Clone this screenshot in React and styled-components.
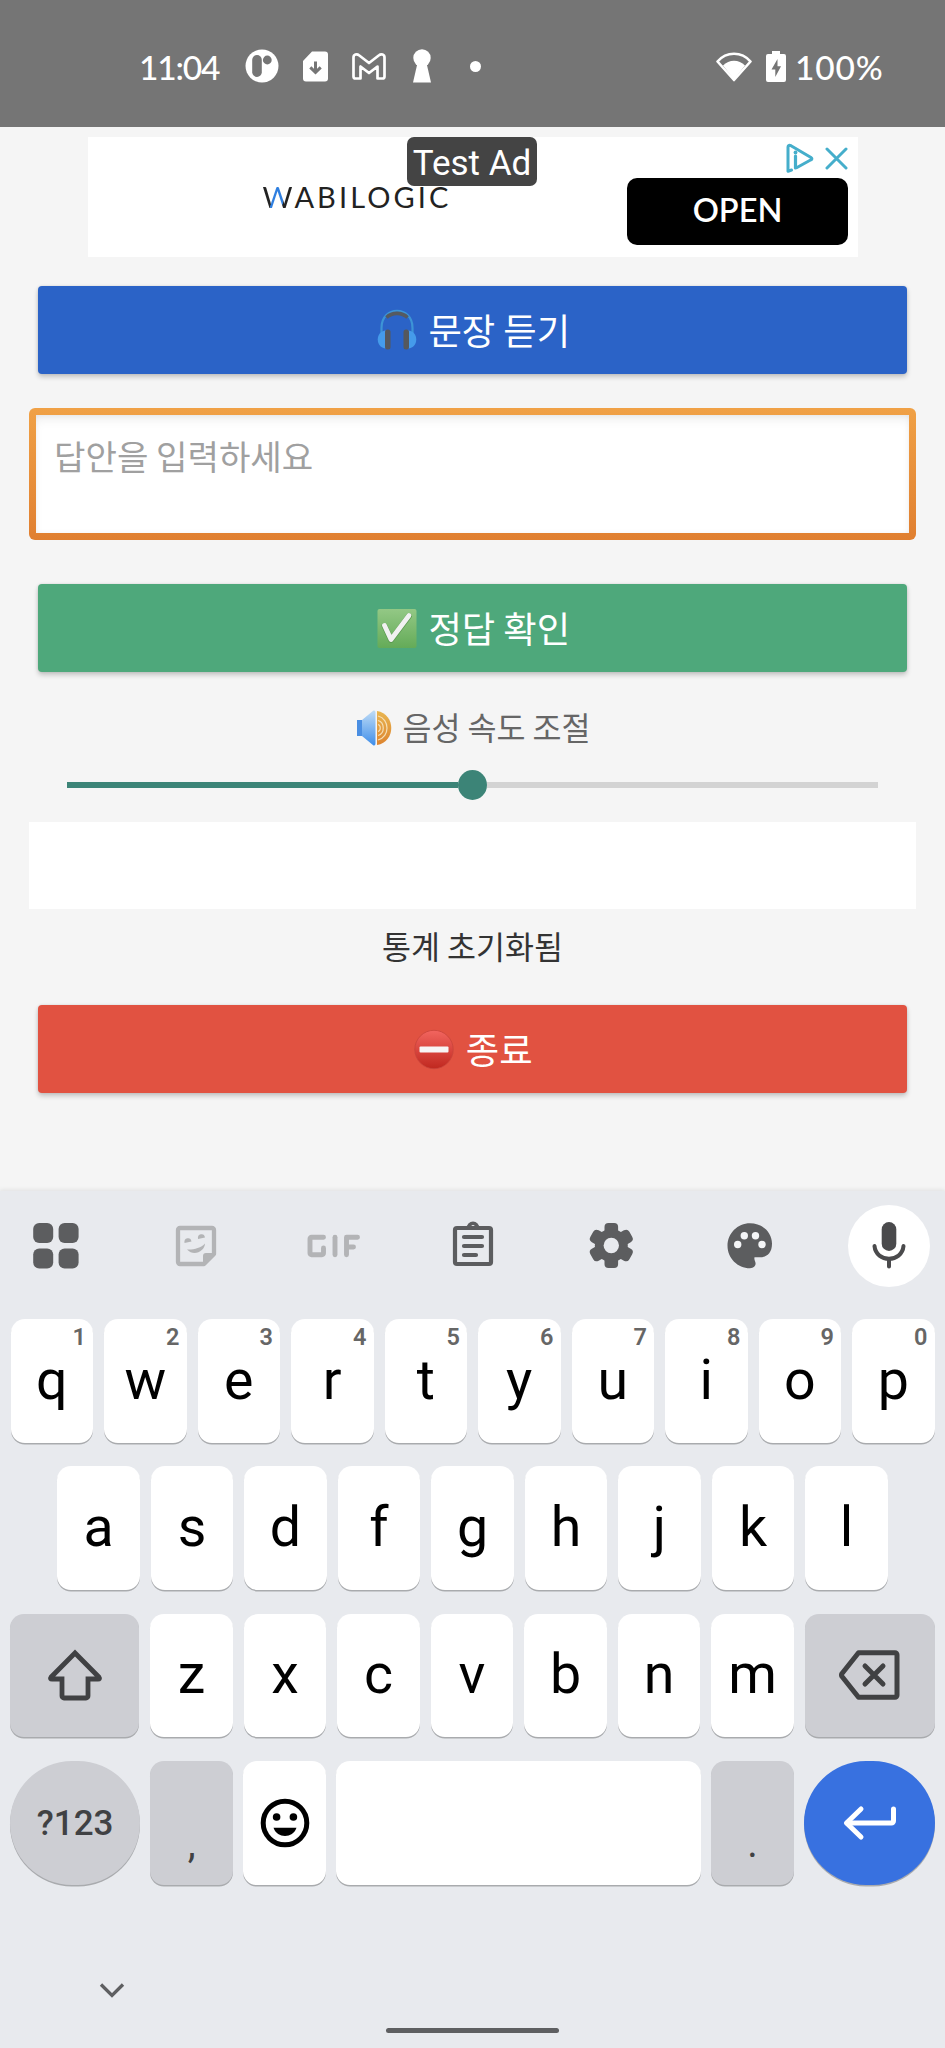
import React from "react";
import styled, { createGlobalStyle } from "styled-components";

const Global = createGlobalStyle`
  * { box-sizing: border-box; }
  body { margin: 0; background: #f5f5f5; }
  svg { display: block; flex: none; }
  button { border: 0; margin: 0; padding: 0; font: inherit; color: inherit; }
`;

const Screen = styled.div`
  width: 945px;
  height: 2048px;
  display: flex;
  flex-direction: column;
  background: #f5f5f5;
  overflow: hidden;
  font-family: Roboto, "Noto Sans CJK KR", sans-serif;
`;

/* ---------- status bar ---------- */
const StatusBar = styled.header`
  height: 127px;
  flex: none;
  padding: 5px 64px 0 139px;
  display: flex;
  align-items: center;
  justify-content: space-between;
  background: #757575;
  color: #fff;
`;
const StatusGroup = styled.div`
  display: flex;
  align-items: center;
`;
const StatusText = styled.span`
  font: 500 33.5px/40px Lato, sans-serif;
  letter-spacing: ${(p) => p.$spacing || "0"};
  width: ${(p) => p.$width}px;
  white-space: nowrap;
  padding-top: 2px;
`;

/* ---------- content ---------- */
const Content = styled.main`
  height: 1064px;
  flex: none;
  padding: 10px 29px 0;
  display: flex;
  flex-direction: column;
`;
const AdBanner = styled.section`
  position: relative;
  width: 770px;
  height: 120px;
  margin: 0 auto;
  background: #fff;
  display: flex;
  justify-content: space-between;
  padding-left: 175px;
  padding-right: 9.5px;
`;
const AdBadge = styled.span`
  position: absolute;
  top: 0;
  left: 319.5px;
  width: 130px;
  height: 49px;
  border-radius: 7px;
  background: #444;
  color: #fff;
  text-align: center;
  font: 400 35px/53px Roboto, sans-serif;
`;
const Brand = styled.span`
  align-self: flex-start;
  margin-top: 42px;
  font: 400 29px/36px Lato, sans-serif;
  letter-spacing: 3.1px;
  color: #222;
`;
const BrandInitial = styled.span`
  background: linear-gradient(100deg, #222 32%, #2f7fe0 33%, #2f7fe0 64%, #222 65%);
  background-clip: text;
  -webkit-background-clip: text;
  color: transparent;
`;
const AdSide = styled.div`
  display: flex;
  flex-direction: column;
  align-items: flex-end;
  padding-top: 6px;
`;
const AdOpen = styled.button`
  width: 221px;
  height: 67px;
  margin-top: 5px;
  border-radius: 10px;
  background: #000;
  color: #fff;
  font: 600 32.5px/62px Lato, sans-serif;
  padding-bottom: 3px;
`;
const ActionButton = styled.button`
  height: 88px;
  margin: ${(p) => p.$top}px 9px 0;
  padding-left: 2px;
  border-radius: 4px;
  background: ${(p) => p.$color};
  color: #fff;
  display: flex;
  align-items: center;
  justify-content: center;
  gap: 11.5px;
  font: 400 36.3px/52px "Noto Sans CJK KR", sans-serif;
  box-shadow: 0 3px 5px rgba(0, 0, 0, 0.2), 0 0 3px rgba(0, 0, 0, 0.1);
`;
const ActionLabel = styled.span`
  position: relative;
  top: -1px;
`;
const AnswerFrame = styled.div`
  height: 132px;
  margin-top: 34px;
  padding: 7px;
  border-radius: 6px;
  background: linear-gradient(#f0a146, #e07f30);
`;
const AnswerInput = styled.textarea`
  display: block;
  width: 100%;
  height: 100%;
  border: 0;
  outline: 0;
  resize: none;
  overflow: hidden;
  padding: 16px 18px;
  background: #fff;
  box-shadow: inset 0 7px 12px -4px rgba(0, 0, 0, 0.09), inset 0 0 5px rgba(0, 0, 0, 0.05);
  font: 400 34.2px/48px "Noto Sans CJK KR", sans-serif;
  &::placeholder { color: #a0a0a0; opacity: 1; }
`;
const SpeedLabel = styled.div`
  height: 44px;
  margin-top: 34px;
  padding-left: 1px;
  display: flex;
  align-items: center;
  justify-content: center;
  gap: 11px;
  color: #666;
  font: 400 31.5px/44px "Noto Sans CJK KR", sans-serif;
`;
const SpeedText = styled.span`
  padding-bottom: 5px;
`;
const Slider = styled.div`
  height: 30px;
  margin: 20px 38px 0;
  display: flex;
  align-items: center;
`;
const SliderTrack = styled.div`
  flex: 1;
  height: 6px;
  background: ${(p) => (p.$on ? "#3c8477" : "#d3d3d3")};
`;
const SliderThumb = styled.div`
  width: 29px;
  height: 30px;
  border-radius: 50%;
  background: #3c8477;
`;
const ResultBox = styled.div`
  height: 87px;
  margin-top: 22px;
  background: #fff;
`;
const StatsText = styled.p`
  margin: 14px 0 0;
  text-align: center;
  color: #333;
  font: 400 31.5px/45px "Noto Sans CJK KR", sans-serif;
`;

/* ---------- keyboard ---------- */
const Keyboard = styled.section`
  flex: 1;
  background: #e8eaee;
  box-shadow: 0 -1px 4px rgba(120, 125, 135, 0.18);
  display: flex;
  flex-direction: column;
`;
const Toolbar = styled.div`
  height: 110px;
  padding: 0 14px;
  display: flex;
  align-items: center;
  justify-content: space-between;
`;
const MicButton = styled.div`
  width: 82px;
  height: 82px;
  margin-right: 1px;
  border-radius: 50%;
  background: #fff;
  display: flex;
  align-items: center;
  justify-content: center;
`;
const Keys = styled.div`
  margin-top: 18px;
  padding: 0 10.4px;
  display: flex;
  flex-direction: column;
  gap: 23.6px;
`;
const KeyRow = styled.div`
  display: flex;
  justify-content: center;
  gap: ${(p) => p.$gap || 11}px;
`;
const tones = {
  light: ["#fff", "#000"],
  gray: ["#cdced3", "#404143"],
  blue: ["#3871e0", "#fff"],
};
const Key = styled.button`
  position: relative;
  width: ${(p) => p.$width || 82.5}px;
  flex: ${(p) => (p.$grow ? "1" : "none")};
  height: 123.7px;
  display: flex;
  align-items: center;
  justify-content: center;
  border-radius: ${(p) => (p.$round ? "65px" : "14px")};
  background: ${(p) => tones[p.$tone || "light"][0]};
  color: ${(p) => tones[p.$tone || "light"][1]};
  box-shadow: 0 1.5px 0.5px #a9abae;
  font: 400 55.5px/66px Roboto, sans-serif;
`;
const KeyHint = styled.span`
  position: absolute;
  top: 4px;
  right: 7px;
  color: #666;
  font: 600 23.5px/28px Roboto, sans-serif;
`;
const SymbolsLabel = styled.span`
  padding-top: 2px;
  font: 500 35px/42px Roboto, sans-serif;
`;
const Punctuation = styled.span`
  align-self: flex-end;
  margin-bottom: 18px;
  font: 400 40px/46px Roboto, sans-serif;
`;
const NavBar = styled.footer`
  flex: 1;
  padding: 97px 0 0 99px;
  display: flex;
  flex-direction: column;
  gap: 29.4px;
`;
const HomeHandle = styled.div`
  width: 173px;
  height: 5px;
  margin-left: 287px;
  border-radius: 3px;
  background: #5e5f61;
`;

/* ---------- drawings ---------- */
const PIcon = () => (
  <svg width="34" height="34" viewBox="-17 -17 34 34">
    <circle r="16.5" fill="#fff" />
    <rect x="-9.8" y="-11" width="9.6" height="22" rx="4.8" fill="#757575" />
    <circle cx="5.3" cy="-6" r="4.4" fill="#757575" />
  </svg>
);
const SdIcon = () => (
  <svg width="25" height="31" viewBox="0 0 25 31">
    <path d="M9 0.5H22a3 3 0 0 1 3 3V27.500a3 3 0 0 1-3 3H3a3 3 0 0 1-3-3V10z" fill="#fff" />
    <path d="M12.500 10.500V21M7.300 16.300l5.200 5 5.200-5" stroke="#757575" strokeWidth="3" fill="none" />
  </svg>
);
const MailIcon = () => (
  <svg width="34" height="27" viewBox="0 0 34 27">
    <path
      d="M1.500 4.500C1.500 1.500 4.800.5 7 2.300L17 10l10-7.700c2.200-1.800 5.500-.8 5.500 2.200V23.500a2 2 0 0 1-2 2H25.500V13.500L17 20 8.500 13.500V25.500H3.500a2 2 0 0 1-2-2z"
      fill="none" stroke="#fff" strokeWidth="2.700" strokeLinejoin="round"
    />
  </svg>
);
const KeyholeIcon = () => (
  <svg width="18" height="34" viewBox="0 0 18 34">
    <circle cx="9" cy="9" r="8.700" fill="#fff" />
    <path d="M4.500 14h9L18 33.500H0z" fill="#fff" />
  </svg>
);
const DotIcon = () => (
  <svg width="11" height="11" viewBox="0 0 11 11"><circle cx="5.500" cy="5.500" r="5.500" fill="#fff" /></svg>
);
const WifiIcon = () => (
  <svg width="36" height="31" viewBox="0 0 36 31">
    <path d="M1.500 10.500C10.500.2 25.500.2 34.500 10.500L18 29z" fill="none" stroke="#fff" strokeWidth="2.600" strokeLinejoin="round" />
    <path d="M7 14.500C13 8 23 8 29 14.500L18 28.500z" fill="#fff" />
  </svg>
);
const BatteryIcon = () => (
  <svg width="20" height="31" viewBox="0 0 20 31">
    <path d="M6 0h8v3h4a2 2 0 0 1 2 2v24a2 2 0 0 1-2 2H2a2 2 0 0 1-2-2V5a2 2 0 0 1 2-2h4z" fill="#fff" />
    <path d="M11.500 8L5.500 18.500H9.300V26L15 15.300H11.500z" fill="#757575" />
  </svg>
);
const AdMarks = () => (
  <svg width="63" height="30" viewBox="0 0 63 30">
    <g fill="none" stroke="#45aecb" strokeWidth="3" strokeLinejoin="round" strokeLinecap="round">
      <path d="M6.500 27L3 28.300V4C3 2 4.500 2 6 2.700L26 14.500c1.200.8 1.200 1.700 0 2.300L12 24.500" />
      <path d="M10.500 13v12" strokeWidth="3.200" />
      <path d="M42 6l19 19M61 6L42 25" />
    </g>
    <circle cx="10.500" cy="9.500" r="1.900" fill="#45aecb" />
  </svg>
);
const Headphones = () => (
  <svg width="40" height="42" viewBox="0 0 40 42">
    <path d="M4.500 26V19C4.500-4 35.500-4 35.500 19v7" fill="none" stroke="#3d94d6" strokeWidth="2.200" />
    <path d="M9.500 8.500C15 3 25 3 30.500 8.500" fill="none" stroke="#555a60" strokeWidth="3.600" />
    <path d="M9 21.500C-2 22-2 39 9 39.500z" fill="#459bea" />
    <path d="M31 21.500C42 22 42 39 31 39.500z" fill="#459bea" />
    <rect x="8" y="20.500" width="5.500" height="20" rx="2.500" fill="#55585d" />
    <rect x="26.500" y="20.500" width="5.500" height="20" rx="2.500" fill="#55585d" />
  </svg>
);
const CheckMark = () => (
  <svg width="40" height="42" viewBox="0.5 -1.500 40 42">
    <defs>
      <linearGradient id="checkFill" x2="0" y2="1"><stop stopColor="#93c885" /><stop offset="1" stopColor="#64ab58" /></linearGradient>
    </defs>
    <rect x="1" y="0.500" width="39" height="39" rx="2" fill="url(#checkFill)" />
    <path d="M8 17.500L14.500 31.500L32.500 7.500" fill="none" stroke="#5b9a50" strokeWidth="5.800" strokeLinecap="round" strokeLinejoin="round" />
    <path d="M8 17L14.500 31L32.500 7" fill="none" stroke="#f1f1f1" strokeWidth="4.800" strokeLinecap="round" strokeLinejoin="round" />
  </svg>
);
const Speaker = () => (
  <svg width="36" height="36" viewBox="0 0 36 36">
    <defs>
      <linearGradient id="coneFill" x2="0" y2="1"><stop stopColor="#bfdcf6" /><stop offset="1" stopColor="#3f8eea" /></linearGradient>
      <linearGradient id="waveFill" x2="0" y2="1"><stop stopColor="#e9b650" /><stop offset="1" stopColor="#dd842f" /></linearGradient>
    </defs>
    <path d="M21 1C40 4 40 32 21 35z" fill="url(#waveFill)" />
    <path d="M22 6c12 3 12 21 0 24M22 10.500c7 2 7 13 0 15M22 14.500c3 1 3 6 0 7" fill="none" stroke="#f5dfb6" strokeWidth="1.200" />
    <path d="M1 10H6L17.500.5q2-.5 2 2V33.500q0 2.500-2 2L6 26H1z" fill="url(#coneFill)" />
    <path d="M1 10H6V26H1z" fill="#4a8ee2" />
  </svg>
);
const NoEntry = () => (
  <svg width="40" height="42" viewBox="0 -1.500 40 42">
    <defs>
      <linearGradient id="stopFill" x2="0" y2="1"><stop stopColor="#f2655f" /><stop offset="1" stopColor="#c0281f" /></linearGradient>
    </defs>
    <circle cx="20" cy="20" r="19.200" fill="url(#stopFill)" stroke="#c8443b" strokeWidth=".8" />
    <rect x="5.500" y="17" width="29" height="6" rx="1" fill="#f7f5f5" />
  </svg>
);

const ToolIcon = ({ children, color = "#5c5d5f" }) => (
  <svg width="84" height="84" viewBox="-42 -42 84 84" fill={color} stroke="none">{children}</svg>
);
const toolStroke = (color, width) => ({
  fill: "none", stroke: color, strokeWidth: width, strokeLinecap: "round", strokeLinejoin: "round",
});
const GridTool = () => (
  <ToolIcon>
    {[-22.8, 2.600].map((x) => [-23, 2.600].map((y) => <rect key={x + "," + y} x={x} y={y} width="20" height="20" rx="6" />))}
  </ToolIcon>
);
const StickerTool = () => (
  <ToolIcon color="#b3b4b6">
    <g transform="translate(1)">
      <path d="M-16-18H16a2 2 0 0 1 2 2V8L8 18H-16a2 2 0 0 1-2-2V-16a2 2 0 0 1 2-2z" {...toolStroke("#b3b4b6", 4.300)} />
      <path d="M7 18V10a3 3 0 0 1 3-3H18z" />
      <path d="M-11.500-3a3.500 4 0 0 1 7-1.500zM2-7a3.500 4 0 0 1 7-1.500zM-9 3.500C-3 4 5 2 9-2.500 9 5-2 11-9 3.500z" />
    </g>
  </ToolIcon>
);
const GifTool = () => (
  <ToolIcon>
    <g {...toolStroke("#b3b4b6", 4.900)}>
      <path d="M-10.500-8.700H-22.500a1.500 1.500 0 0 0-1.500 1.500V7.200A1.500 1.500 0 0 0-22.500 8.700H-12a1.500 1.500 0 0 0 1.500-1.500V2" />
      <path d="M1-8.700V8.700" />
      <path d="M23.500-8.700H12.500V8.700M12.500 1H19.500" />
    </g>
  </ToolIcon>
);
const ClipboardTool = () => (
  <ToolIcon>
    <path d="M-16-18H16a2 2 0 0 1 2 2V16a2 2 0 0 1-2 2H-16a2 2 0 0 1-2-2V-16a2 2 0 0 1 2-2z" {...toolStroke("#5c5d5f", 4.200)} />
    <path fillRule="evenodd" d="M-6.500-17.500a6.500 7 0 0 1 13 0zM0-21a2 2 0 1 0 .01 0z" />
    <path d="M-9-9H9M-9 0H9M-9 9H3" {...toolStroke("#5c5d5f", 4.200)} />
  </ToolIcon>
);
const SettingsTool = () => (
  <ToolIcon>
    <g transform="translate(-.7 -.5)">
      <g>
        {[0, 60, 120].map((a) => (
          <rect key={a} x="-6.800" y="-22.500" width="13.600" height="45" rx="4" transform={`rotate(${a})`} />
        ))}
        <circle r="16.500" />
      </g>
      <circle r="7.700" fill="#e8eaee" />
    </g>
  </ToolIcon>
);
const PaletteTool = () => (
  <ToolIcon>
    <g transform="translate(-1 -.3)">
      <path d="M0-22.500C-12.400-22.500-22.500-12.400-22.500 0S-12.400 22.500 0 22.500C4 22.500 6 20 5.500 17 5 15 4 14 4.500 11.500H10C17 11.500 22 7 22-2 22-14 12-22.500 0-22.500z" />
      <g fill="#f4f5f7">
        <circle cx="-12.300" cy="-1.200" r="3.700" />
        <circle cx="-5.700" cy="-10" r="3.700" />
        <circle cx="5.500" cy="-10" r="3.700" />
        <circle cx="12" cy="-1.200" r="3.700" />
      </g>
    </g>
  </ToolIcon>
);
const MicIcon = () => (
  <svg width="40" height="50" viewBox="-20 -25 40 50">
    <rect x="-7.300" y="-24" width="14.600" height="29" rx="7.300" fill="#4a4a4c" />
    <path d="M-14.500 0C-13 17 13 17 14.500 0M0 13V20.500" {...toolStroke("#4a4a4c", 4)} />
  </svg>
);
const ShiftIcon = () => (
  <svg width="56" height="54" viewBox="-28 -27 56 54">
    <path d="M0-22L-24 2.200C-25 3.500-24.500 4-23 4H-13V21a2 2 0 0 0 2 2H11a2 2 0 0 0 2-2V4H23C24.500 4 25 3.500 24 2.200z" fill="none" stroke="#404143" strokeWidth="4.800" />
  </svg>
);
const BackspaceIcon = () => (
  <svg width="64" height="54" viewBox="-32 -27 64 54">
    <g {...toolStroke("#404143", 5)}>
      <path d="M-11.500-22.300H25a2 2 0 0 1 2 2V20.300a2 2 0 0 1-2 2H-11.500L-28 1.500q-1-1.500 0-3z" />
      <path d="M-5-9L13 9M13-9L-5 9" />
    </g>
  </svg>
);
const SmileIcon = () => (
  <svg width="50" height="50" viewBox="-25 -25 50 50">
    <circle r="21.800" fill="none" stroke="#000" strokeWidth="5" />
    <circle cx="-8.400" cy="-6" r="3.800" />
    <circle cx="8.400" cy="-6" r="3.800" />
    <path d="M-11.500 4.800H11.500C9.500 10.500 5 13 0 13S-9.500 10.500-11.500 4.800z" />
  </svg>
);
const EnterIcon = () => (
  <svg width="56" height="40" viewBox="-28 -20 56 40">
    <g {...toolStroke("#fff", 5)}>
      <path d="M24.500-14V-2a2 2 0 0 1-2 2H-22" />
      <path d="M-8-14L-22.500 0L-8 14" />
    </g>
  </svg>
);
const ChevronIcon = () => (
  <svg width="26" height="17" viewBox="0 0 26 17">
    <path d="M2 2.500L13 13.500L24 2.500" fill="none" stroke="#5e5f61" strokeWidth="3.300" />
  </svg>
);

const Gap = styled.span`
  width: ${(p) => p.$w}px;
`;

export default function App() {
  return (
    <Screen>
      <Global />
      <StatusBar>
        <StatusGroup>
          <StatusText $width={106} $spacing="-1.2px">11:04</StatusText>
          <PIcon />
          <Gap $w={24} />
          <SdIcon />
          <Gap $w={24} />
          <MailIcon />
          <Gap $w={27} />
          <KeyholeIcon />
          <Gap $w={39} />
          <DotIcon />
        </StatusGroup>
        <StatusGroup>
          <WifiIcon />
          <Gap $w={14} />
          <BatteryIcon />
          <Gap $w={9} />
          <StatusText $width={86} $spacing="0.8px">100%</StatusText>
        </StatusGroup>
      </StatusBar>

      <Content>
        <AdBanner>
          <Brand><BrandInitial>W</BrandInitial>ABILOGIC</Brand>
          <AdBadge>Test Ad</AdBadge>
          <AdSide>
            <AdMarks />
            <AdOpen>OPEN</AdOpen>
          </AdSide>
        </AdBanner>
        <ActionButton $color="#2b63c7" $top={29}>
          <Headphones />
          <ActionLabel>문장 듣기</ActionLabel>
        </ActionButton>
        <AnswerFrame>
          <AnswerInput placeholder="답안을 입력하세요" />
        </AnswerFrame>
        <ActionButton $color="#4ea87b" $top={44}>
          <CheckMark />
          <ActionLabel>정답 확인</ActionLabel>
        </ActionButton>
        <SpeedLabel>
          <Speaker />
          <SpeedText>음성 속도 조절</SpeedText>
        </SpeedLabel>
        <Slider>
          <SliderTrack $on />
          <SliderThumb />
          <SliderTrack />
        </Slider>
        <ResultBox />
        <StatsText>통계 초기화됨</StatsText>
        <ActionButton $color="#e15241" $top={37}>
          <NoEntry />
          <ActionLabel>종료</ActionLabel>
        </ActionButton>
      </Content>

      <Keyboard>
        <Toolbar>
          <GridTool />
          <StickerTool />
          <GifTool />
          <ClipboardTool />
          <SettingsTool />
          <PaletteTool />
          <MicButton><MicIcon /></MicButton>
        </Toolbar>
        <Keys>
          <KeyRow>
            {[..."qwertyuiop"].map((letter, i) => (
              <Key key={letter}>
                {letter}
                <KeyHint>{(i + 1) % 10}</KeyHint>
              </Key>
            ))}
          </KeyRow>
          <KeyRow>
            {[..."asdfghjkl"].map((letter) => <Key key={letter}>{letter}</Key>)}
          </KeyRow>
          <KeyRow>
            <Key $tone="gray" $width={129}><ShiftIcon /></Key>
            {[..."zxcvbnm"].map((letter) => <Key key={letter}>{letter}</Key>)}
            <Key $tone="gray" $width={130}><BackspaceIcon /></Key>
          </KeyRow>
          <KeyRow $gap={10.5}>
            <Key $tone="gray" $width={129.5} $round><SymbolsLabel>?123</SymbolsLabel></Key>
            <Key $tone="gray"><Punctuation>,</Punctuation></Key>
            <Key><SmileIcon /></Key>
            <Key $grow aria-label="space" />
            <Key $tone="gray"><Punctuation>.</Punctuation></Key>
            <Key $tone="blue" $width={130.3} $round><EnterIcon /></Key>
          </KeyRow>
        </Keys>
        <NavBar>
          <ChevronIcon />
          <HomeHandle />
        </NavBar>
      </Keyboard>
    </Screen>
  );
}
